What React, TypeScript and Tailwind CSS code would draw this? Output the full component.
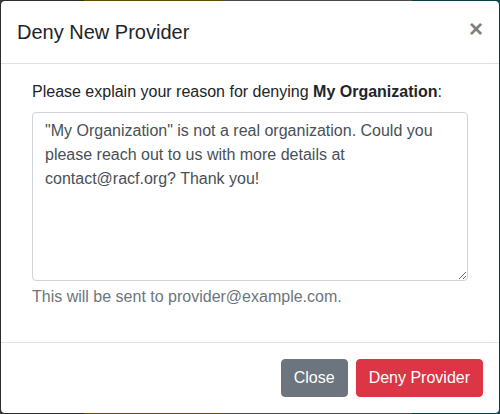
export default function App() {
  return (
    <div className="h-[414px] w-[500px] overflow-hidden bg-[linear-gradient(to_right,#3a3a3a_0_84px,#7f6004_84px_222px,#5c5c5c_222px_412px,#0b4f58_412px)] font-['Liberation_Sans',Arial,sans-serif]">
      <div className="flex h-[414px] w-full flex-col rounded-[5px] border border-black/20 bg-white bg-clip-padding text-[#212529]">
        <div className="flex items-start justify-between border-b border-[#dee2e6] p-4">
          <h5 className="text-[20px] font-medium leading-[30px]">Deny New Provider</h5>
          <button
            type="button"
            aria-label="Close"
            className="-m-4 ml-auto p-4 text-[24px] font-bold leading-none text-black opacity-50"
          >
            ×
          </button>
        </div>

        <div className="flex-1 p-4">
          <div className="mb-4 px-[15px]">
            <label className="mb-2 block text-[16px] leading-6">
              Please explain your reason for denying <b>My Organization</b>:
            </label>
            <textarea
              className="block h-[169px] w-full rounded border border-[#ced4da] px-3 py-1.5 text-[16px] leading-6 text-[#495057] outline-none"
              defaultValue={'"My Organization" is not a real organization. Could you please reach out to us with more details at contact@racf.org? Thank you!'}
            />
            <small className="mt-1 block text-[16px] leading-6 text-[#6c757d]">
              This will be sent to provider@example.com.
            </small>
          </div>
        </div>

        <div className="flex items-center justify-end gap-2 border-t border-[#dee2e6] p-4">
          <button
            type="button"
            className="rounded border border-[#6c757d] bg-[#6c757d] px-3 py-1.5 text-[16px] leading-6 text-white"
          >
            Close
          </button>
          <button
            type="button"
            className="rounded border border-[#dc3545] bg-[#dc3545] px-3 py-1.5 text-[16px] leading-6 text-white"
          >
            Deny Provider
          </button>
        </div>
      </div>
    </div>
  )
}
